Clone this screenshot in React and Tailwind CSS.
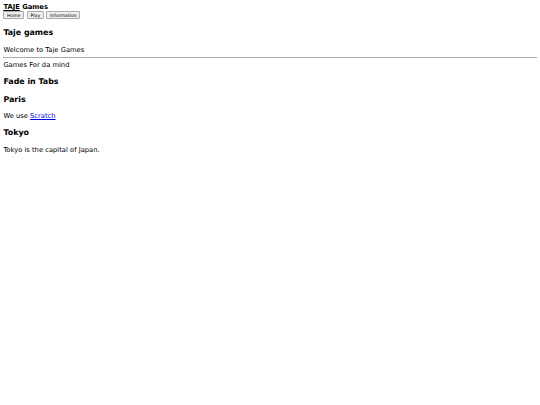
export default function App() {
  const btn = "h-[8px] bg-[#efefef] border border-[#a9a9a9] rounded-[1px] px-[2.6px] leading-[5.5px] text-[4.65px] font-['DejaVu_Sans',sans-serif] text-black";
  const h3 = "text-[7.9px] leading-[9.6px] font-bold my-[7.9px]";
  const p = "my-[7.9px]";
  return (
    <div className="m-[3.4px] font-['DejaVu_Sans',sans-serif] text-[6.75px] leading-[8px] text-black">
      <div className="font-bold"><span className="underline">TAJE</span> Games</div>
      <div className="flex items-start gap-[2.6px] h-[8.9px]">
        <button className={btn}>Home</button>
        <button className={btn}>Play</button>
        <button className={btn}>Information</button>
      </div>
      <h3 className={h3}>Taje games</h3>
      <div>Welcome to Taje Games</div>
      <hr className="my-[3.4px] border-t border-[#aaaaaa]" />
      <div>Games For da mind</div>
      <h3 className={h3}>Fade in Tabs</h3>
      <h3 className={h3}>Paris</h3>
      <p className={p}>We use <a href="#" className="text-[#0000ee] underline">Scratch</a></p>
      <h3 className={h3}>Tokyo</h3>
      <p className={p}>Tokyo is the capital of Japan.</p>
    </div>
  );
}
